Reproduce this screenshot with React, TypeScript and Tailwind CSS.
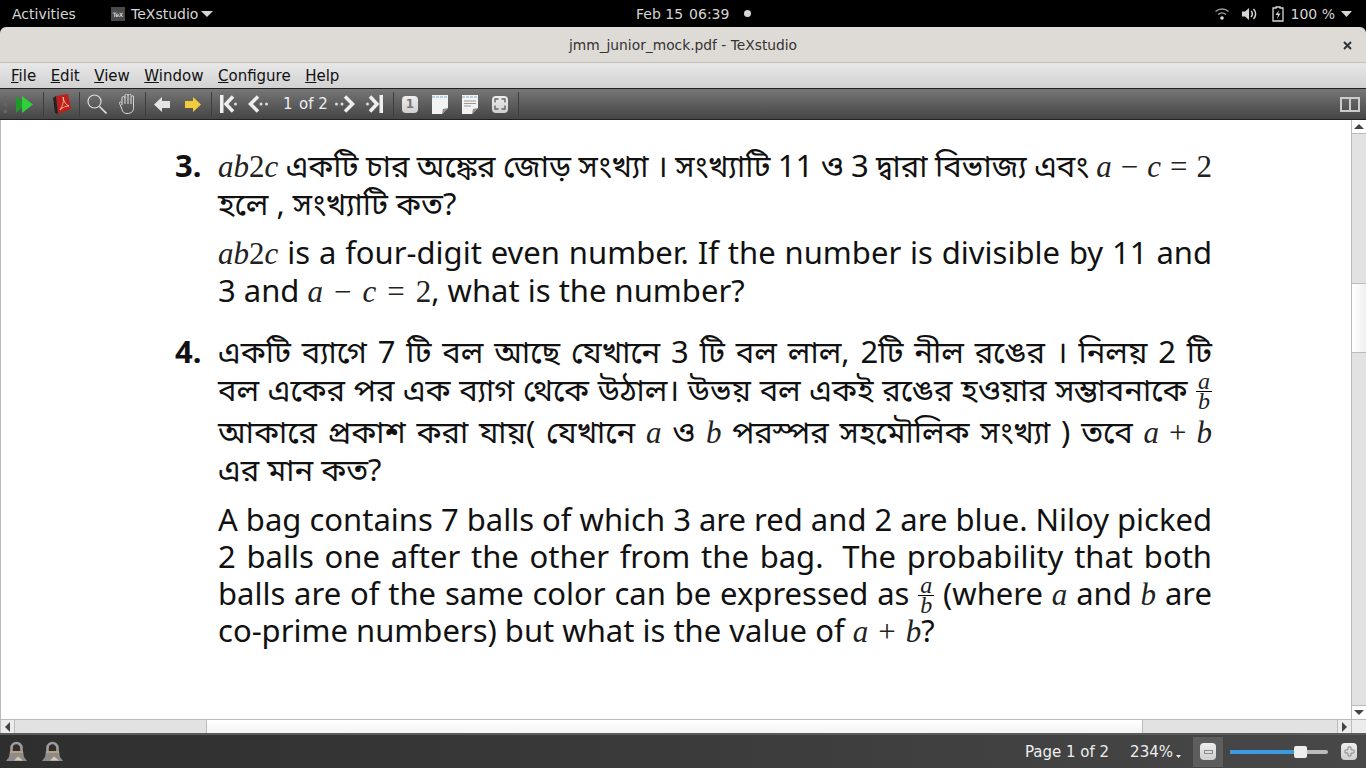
const sans = "font-['Noto_Sans','Noto_Sans_Bengali',sans-serif]";
const ui = "font-['DejaVu_Sans',sans-serif]";
const row = 'h-[38px] leading-[38px] whitespace-nowrap';
const just = 'text-justify [text-align-last:justify]';

function M(props: { children: any }) {
  return <span className="font-['Liberation_Serif',serif] text-[#222]">{props.children}</span>;
}

function Abc() {
  return <M><i>ab</i>2<i>c</i></M>;
}

function Eq(props: { gap: string }) {
  return (
    <M>
      <i>a</i><span className={props.gap}>−</span><i>c</i><span className={props.gap}>=</span>2
    </M>
  );
}

function Sum() {
  return <M><i>a</i><span className="mx-[10px]">+</span><i>b</i></M>;
}

function Frac() {
  return (
    <span className="font-['Liberation_Serif',serif] italic text-[#222] inline-flex flex-col items-center align-middle text-[24px] leading-[19px] -mt-[2px]">
      <span className="border-b border-black px-[2px]">a</span>
      <span>b</span>
    </span>
  );
}

function Sep(props: { ml: string }) {
  return <div className={`w-px h-6 bg-[#3c3c3c] ${props.ml}`} />;
}

function Arrow(props: { color: string; ml: string; flip?: boolean }) {
  return (
    <svg width="16" height="15" viewBox="0 0 16 15" className={`${props.ml} ${props.flip ? '-scale-x-100' : ''}`}>
      <path d="M0 7.5 L8 0 V4 H16 V11 H8 V15 Z" fill={props.color} />
    </svg>
  );
}

function Nav(props: { kind: 'edge' | 'step'; w: number; ml: string; flip?: boolean }) {
  return (
    <svg width={props.w} height="18" viewBox={`0 0 ${props.w} 18`} className={`${props.ml} ${props.flip ? '-scale-x-100' : ''}`}>
      {props.kind === 'edge' && <rect x="0" y="0" width="3.5" height="18" fill="#efefef" />}
      <path
        d={props.kind === 'edge' ? 'M13 1.5 L6 9 L13 16.5' : 'M10 1.5 L2.5 9 L10 16.5'}
        fill="none"
        stroke="#efefef"
        strokeWidth="3.5"
      />
      {props.kind === 'edge' ? (
        <circle cx="15.5" cy="9" r="1.5" fill="#ddd" />
      ) : (
        <>
          <circle cx="13" cy="9" r="1.5" fill="#ddd" />
          <circle cx="18.5" cy="9" r="1.5" fill="#ddd" />
        </>
      )}
    </svg>
  );
}

function PageIcon(props: { lines?: boolean }) {
  return (
    <svg width="16" height="19" viewBox="0 0 16 19" className="ml-[14px]">
      <path d="M0 0 H16 V13 L10 19 H0 Z" fill="#f3f3f1" />
      <path d="M0 2 H16" stroke="#a9c3df" strokeWidth="1.6" strokeDasharray="3 1" />
      {props.lines && <path d="M2 6 H14 M2 8.5 H14 M2 11 H9" stroke="#999" strokeWidth="1.2" />}
      <path d="M10 19 L11 14 L16 13 Z" fill="#8a8a8a" />
    </svg>
  );
}

function Lock(props: { ml: string }) {
  return (
    <svg width="21" height="22" viewBox="0 0 21 22" className={props.ml}>
      <path d="M5.5 10 V7 a5 5 0 0 1 10 0 V10" fill="none" stroke="#9c9c9c" strokeWidth="2.6" />
      <path d="M4 10 H17 L18 16 L21 20 H0 L3 16 Z" fill="#8c8c8c" />
      <path d="M4 11 H17" stroke="#c9a869" strokeWidth="1.6" />
      <path d="M8 19.5 L12 15.5 L17 19.5 Z" fill="#d9cbab" />
    </svg>
  );
}

function Btn(props: { children: any; ml: string }) {
  return (
    <div className={`w-[16px] h-[17px] rounded-[4px] bg-gradient-to-b from-[#eee] to-[#cfcfcf] flex items-center justify-center ${props.ml}`}>
      {props.children}
    </div>
  );
}

export default function App() {
  return (
    <div className={`w-[1366px] h-[768px] overflow-hidden flex flex-col bg-black ${ui}`}>
      {/* gnome top bar */}
      <div className="h-[27px] shrink-0 flex items-center text-[14px] text-[#d6d6d6] relative">
        <span className="ml-3 w-[99px] pt-[1px]">Activities</span>
        <span className="w-[14px] h-[14px] bg-[#4a4a4a] text-[6px] leading-[16px] text-center text-white mr-[6px]">TeX</span>
        <span className="pt-[1px]">TeXstudio</span>
        <svg width="12" height="6" viewBox="0 0 12 6" className="ml-[3px]"><path d="M0 0 H12 L6 6 Z" fill="#d6d6d6" /></svg>
        <div className="absolute left-[636px] top-0 h-[27px] flex items-center">
          <span className="pt-[1px]">Feb 15</span>
          <span className="pt-[1px] ml-[6px]">06:39</span>
          <span className="w-[7px] h-[7px] rounded-full bg-[#d6d6d6] ml-[15px]" />
        </div>
        <div className="ml-auto flex items-center mr-[14px]">
          <svg width="14" height="13" viewBox="0 0 14 13">
            <path d="M0.5 4.5 a9.5 9.5 0 0 1 13 0 M3 7.5 a6 6 0 0 1 8 0" fill="none" stroke="#999" strokeWidth="1.5" />
            <circle cx="7" cy="11" r="1.8" fill="#ddd" />
          </svg>
          <svg width="15" height="14" viewBox="0 0 15 14" className="ml-[13px]">
            <path d="M0 4.5 H3 L7 1 V13 L3 9.5 H0 Z" fill="#d6d6d6" />
            <path d="M9 4 a4 4 0 0 1 0 6 M11.5 2 a7 7 0 0 1 0 10" fill="none" stroke="#d6d6d6" strokeWidth="1.5" />
          </svg>
          <svg width="12" height="16" viewBox="0 0 12 16" className="ml-[15px]">
            <path d="M4 1 H8 V2 H11 V15 H1 V2 H4 Z" fill="none" stroke="#d6d6d6" strokeWidth="1.3" />
            <path d="M7 4 L3.5 9 H6 L5 13 L8.5 7.5 H6 Z" fill="#d6d6d6" />
          </svg>
          <span className="ml-[7px] pt-[1px]">100 %</span>
          <svg width="11" height="6" viewBox="0 0 11 6" className="ml-[6px]"><path d="M0 0 H11 L5.5 6 Z" fill="#d6d6d6" /></svg>
        </div>
      </div>

      {/* title bar */}
      <div className="h-[36px] shrink-0 pt-[1px] bg-[#dedbd6] rounded-t-[6px] border-b border-[#c4c0b8] flex items-center justify-center relative text-[13.8px] font-medium text-[#333]">
        jmm_junior_mock.pdf - TeXstudio
        <svg width="9" height="9" viewBox="0 0 9 9" className="absolute right-[14px] top-[14px]">
          <path d="M1 1 L8 8 M8 1 L1 8" stroke="#2e3436" strokeWidth="2" />
        </svg>
      </div>

      {/* menu bar */}
      <div className="h-[25px] shrink-0 pt-[1px] bg-gradient-to-b from-[#e8e8e8] to-[#d2d2d2] flex items-center pl-[11px] gap-[14.5px] text-[15px] text-[#111]">
        <span><u>F</u>ile</span>
        <span><u>E</u>dit</span>
        <span><u>V</u>iew</span>
        <span><u>W</u>indow</span>
        <span><u>C</u>onfigure</span>
        <span><u>H</u>elp</span>
      </div>

      {/* pdf toolbar */}
      <div className="h-[32px] shrink-0 border-y border-[#222] bg-gradient-to-b from-[#777] to-[#454545] flex items-center text-[15px] text-[#eee]">
        <div className="w-[5px] h-[17px] ml-[4px] border-l-[3px] border-dotted border-[#666]" />
        <svg width="17" height="17" viewBox="0 0 17 17" className="ml-[7px]">
          <path d="M0 0 L9 8.5 L0 17 Z" fill="#1d9a2a" />
          <path d="M6 0 L17 8.5 L6 17 Z" fill="#2fd03a" />
        </svg>
        <Sep ml="ml-[10px]" />
        <svg width="18" height="20" viewBox="0 0 18 20" className="ml-[9px]">
          <path d="M3 2 L15 0 L18 15 L5 20 Z" fill="#c01d1d" />
          <path d="M0 4 L3 2 L5 20 L2 19 Z" fill="#222" />
          <path d="M7 16 C10 11 11 7 10 3 C11 8 13 11 16 12 C13 12 10 13 7 16 Z" fill="none" stroke="#eeb" strokeWidth="0.7" />
        </svg>
        <Sep ml="ml-[8px]" />
        <svg width="20" height="20" viewBox="0 0 20 20" className="ml-[7px]">
          <circle cx="7.5" cy="7.5" r="6.5" fill="none" stroke="#ddd" strokeWidth="1.2" />
          <path d="M12.5 12.5 L19.5 19.5" stroke="#ddd" strokeWidth="1.6" />
        </svg>
        <svg width="15" height="20" viewBox="0 0 15 20" className="ml-[12px]">
          <path d="M3 11 V4 M6 10 V1.5 M9 10 V1.5 M12 10 V3 M3 4 a1.5 1.5 0 0 1 3 0 M6 1.5 a1.5 1.5 0 0 1 3 0 M9 1.5 a1.5 1.5 0 0 1 3 0 M12 3 a1.3 1.3 0 0 1 2.6 0 V13 C14.6 17 13 19.5 8 19.5 C4 19.5 3.5 17 2.5 14 L0.6 9.5 a1 1 0 0 1 2 -1" fill="none" stroke="#ddd" strokeWidth="1" />
        </svg>
        <Sep ml="ml-[11px]" />
        <Arrow color="#e4e4e4" ml="ml-[8px]" />
        <Arrow color="#f2cc3f" ml="ml-[15px]" flip />
        <Sep ml="ml-[10px]" />
        <Nav kind="edge" w={18} ml="ml-[8px]" />
        <Nav kind="step" w={22} ml="ml-[10px]" />
        <span className="ml-[13px] w-[9px]">1</span>
        <span className="ml-[7px] w-[30px] whitespace-nowrap">of 2</span>
        <Nav kind="step" w={20} ml="ml-[6px]" flip />
        <Nav kind="edge" w={19} ml="ml-[9px]" flip />
        <Sep ml="ml-[10px]" />
        <Btn ml="ml-[8px]"><span className="text-[#777] text-[12px] leading-none font-bold">1</span></Btn>
        <PageIcon />
        <PageIcon lines />
        <Btn ml="ml-[14px]">
          <svg width="12" height="12" viewBox="0 0 12 12">
            <path d="M1 4.5 V1 H4.5 M7.5 1 H11 V4.5 M11 7.5 V11 H7.5 M4.5 11 H1 V7.5" fill="none" stroke="#666" strokeWidth="1.4" />
          </svg>
        </Btn>
        <Sep ml="ml-[10px]" />
        <div className="ml-auto mr-[6px] w-[20px] h-[15px] border-2 border-[#ccc] flex justify-center">
          <div className="w-[2px] bg-[#ccc]" />
        </div>
      </div>

      {/* viewer */}
      <div className="h-[613px] shrink-0 flex bg-white border-l border-[#bbb]">
        <div className="flex-1 flex flex-col min-w-0">
          <div className={`flex-1 min-h-0 pl-[174px] pt-[26px] text-[31px] text-[#111] ${sans}`}>
            <div className="flex">
              <div className={`w-[43px] font-bold ${row}`}>3.</div>
              <div className="w-[994px]">
                <div className={`${row} ${just} [word-spacing:-2.5px]`}><Abc /> একটি চার অঙ্কের জোড় সংখ্যা । সংখ্যাটি 11 ও 3 দ্বারা বিভাজ্য এবং <span className="[word-spacing:0]"><Eq gap="mx-[9px]" /></span></div>
                <div className={row}>হলে , সংখ্যাটি কত?</div>
                <div className={`${row} ${just} mt-[11px]`}><Abc /> is a four-digit even number. If the number is divisible by 11 and</div>
                <div className={row}>3 and <Eq gap="mx-[11px]" />, what is the number?</div>
              </div>
            </div>
            <div className="flex mt-[23px]">
              <div className={`w-[43px] font-bold ${row}`}>4.</div>
              <div className="w-[994px]">
                <div className={`${row} ${just}`}>একটি ব্যাগে 7 টি বল আছে যেখানে 3 টি বল লাল, 2টি নীল রঙের । নিলয় 2 টি</div>
                <div className={`${row} ${just} [word-spacing:-1px]`}>বল একের পর এক ব্যাগ থেকে উঠাল। উভয় বল একই রঙের হওয়ার সম্ভাবনাকে <Frac /></div>
                <div className={`${row} ${just} mt-[4px]`}>আকারে প্রকাশ করা যায়( যেখানে <M><i>a</i></M> ও <M><i>b</i></M> পরস্পর সহমৌলিক সংখ্যা ) তবে <Sum /></div>
                <div className={row}>এর মান কত?</div>
                <div className="mt-[13px] [&>div]:h-[37px] [&>div]:leading-[37px] [&>div]:whitespace-nowrap">
                  <div className={just}>A bag contains 7 balls of which 3 are red and 2 are blue. Niloy picked</div>
                  <div className={just}>2 balls one after the other from the bag. <span className="ml-2">The</span> probability that both</div>
                  <div className={just}>balls are of the same color can be expressed as <Frac /> (where <M><i>a</i></M> and <M><i>b</i></M> are</div>
                  <div>co-prime numbers) but what is the value of <Sum />?</div>
                </div>
              </div>
            </div>
          </div>
          {/* horizontal scrollbar */}
          <div className="h-[14px] shrink-0 flex border-t border-[#bbb] bg-white">
            <div className="w-[14px] border-r border-[#bbb] bg-[#ececec] flex items-center justify-center">
              <div className="border-y-[5px] border-y-transparent border-r-[5px] border-r-[#444]" />
            </div>
            <div className="w-[192px] bg-[#e2e2e2] border-r border-[#bbb]" />
            <div className="w-[935px] bg-gradient-to-b from-white to-[#f4f4f4]" />
            <div className="flex-1 bg-[#e2e2e2] border-l border-[#bbb]" />
            <div className="w-[14px] border-l border-[#bbb] bg-[#ececec] flex items-center justify-center">
              <div className="border-y-[5px] border-y-transparent border-l-[5px] border-l-[#444]" />
            </div>
          </div>
        </div>
        {/* vertical scrollbar */}
        <div className="w-[15px] shrink-0 flex flex-col border-l border-[#bbb] bg-[#ececec]">
          <div className="h-[14px] shrink-0 bg-white border-b border-[#bbb] flex items-center justify-center">
            <div className="border-x-[5px] border-x-transparent border-b-[5px] border-b-[#444]" />
          </div>
          <div className="h-[150px] shrink-0 bg-[#e2e2e2] border-b border-[#bbb]" />
          <div className="h-[69px] shrink-0 bg-gradient-to-r from-white to-[#f0f0f0] border-b border-[#bbb]" />
          <div className="flex-1 bg-[#e2e2e2]" />
          <div className="h-[14px] shrink-0 bg-white border-t border-[#bbb] flex items-center justify-center">
            <div className="border-x-[5px] border-x-transparent border-t-[5px] border-t-[#444]" />
          </div>
          <div className="h-[14px] shrink-0 bg-[#ececec] border-t border-[#bbb]" />
        </div>
      </div>

      {/* status bar */}
      <div className="h-[35px] shrink-0 border-t-2 border-[#5a5a5a] bg-gradient-to-r from-[#2e2e2e] to-[#484848] flex items-center text-[#eee] text-[15px]">
        <Lock ml="ml-[6px]" />
        <Lock ml="ml-[15px]" />
        <span className="ml-auto pt-[1px]">Page 1 of 2</span>
        <span className="ml-[21px] pt-[1px]">234%</span>
        <svg width="5" height="3" viewBox="0 0 5 3" className="ml-[3px] mt-[10px]"><path d="M0 0 H5 L2.5 3 Z" fill="#eee" /></svg>
        <div className="w-[30px] h-[30px] bg-[#5d5d5d] ml-[12px] flex items-center justify-center">
          <Btn ml="">
            <div className="w-[9px] h-[4px] border border-[#888]" />
          </Btn>
        </div>
        <div className="w-[98px] h-[4px] ml-[7px] rounded-full bg-[#bbb] relative">
          <div className="w-[66px] h-[4px] rounded-full bg-[#3b9ae0]" />
          <div className="absolute left-[64px] -top-[4px] w-[13px] h-[12px] rounded-[2px] bg-[#eee]" />
        </div>
        <Btn ml="ml-[13px] mr-[9px]">
          <svg width="11" height="11" viewBox="0 0 11 11"><path d="M4 1 H7 V4 H10 V7 H7 V10 H4 V7 H1 V4 H4 Z" fill="none" stroke="#888" /></svg>
        </Btn>
      </div>
    </div>
  );
}
